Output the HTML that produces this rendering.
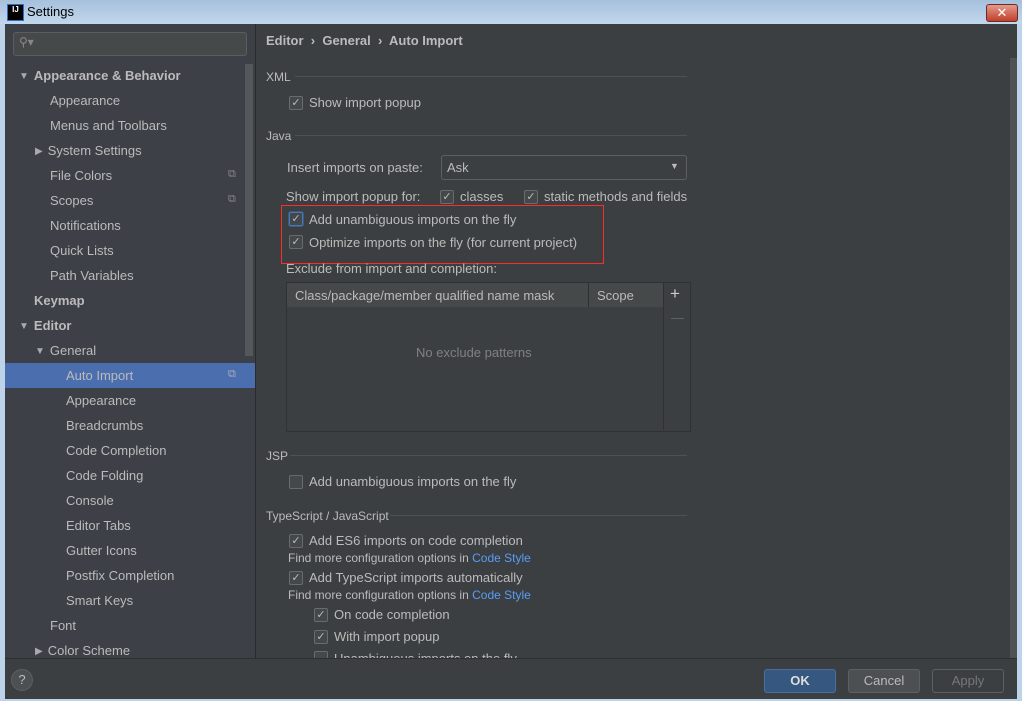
<!DOCTYPE html><html><head><style>
body{margin:0;width:1022px;height:701px;overflow:hidden;background:#bcd3ea;font-family:"Liberation Sans","DejaVu Sans",sans-serif;font-size:13px;color:#bbbbbb;position:relative}
.a{position:absolute;white-space:nowrap}
.title{position:absolute;left:0;top:0;width:1022px;height:24px;background:linear-gradient(#a6c0dc,#c2d7ec)}
.win{position:absolute;left:5px;top:24px;width:1012px;height:674px;background:#3c3f41}
.side{position:absolute;left:5px;top:24px;width:250px;height:634px;background:#3d4047;border-right:1px solid #2b2b2b}
.foot{position:absolute;left:5px;top:658px;width:1012px;height:40px;background:#3c3f41;border-top:1px solid #2d2f30}
.cb{position:absolute;width:12px;height:12px;border:1px solid #6b6b6b;border-radius:2px;background:#43494a;font-size:11px;line-height:12px;text-align:center;color:#bbb}
.sep{position:absolute;height:1px;background:#4f5254}
.btn{position:absolute;height:22px;border:1px solid #5e6060;border-radius:3px;background:#4c5052;text-align:center;line-height:22px}
.tr{font-size:10px;color:#aaa;margin-right:5px;position:relative;top:-1px}
a{color:#589df6;text-decoration:none}
</style></head><body>
<div class="title"></div>
<div class="a" style="left:7px;top:4px;width:15px;height:15px;background:#000;border:1px solid #2a6fc9;color:#fff;font-size:8px;font-weight:bold;line-height:9px;text-align:center">IJ</div>
<div class="a" style="left:27px;top:4px;color:#000;font-size:13px">Settings</div>
<div class="a" style="left:986px;top:4px;width:30px;height:16px;background:linear-gradient(#e49a8a,#c0402c);border:1px solid #6b2a2a;border-radius:3px;color:#fff;font-weight:bold;text-align:center;line-height:16px;font-size:13px">✕</div>
<div class="win"></div>
<div class="side"></div>
<div class="a" style="left:13px;top:32px;width:232px;height:22px;border:1px solid #5a5d60;border-radius:3px;background:#45494a"></div>
<div class="a" style="left:19px;top:35px;color:#888;font-size:12px">⚲▾</div>
<div class="a" style="left:245px;top:64px;width:8px;height:292px;background:#55585b"></div>
<div class="a" style="left:5px;top:363px;width:250px;height:25px;background:#4b6eaf"></div>
<div class="a" style="left:19px;top:68px;font-weight:bold"><span class="tr">▼</span>Appearance &amp; Behavior</div>
<div class="a" style="left:50px;top:93px">Appearance</div>
<div class="a" style="left:50px;top:118px">Menus and Toolbars</div>
<div class="a" style="left:35px;top:143px"><span class="tr">▶</span>System Settings</div>
<div class="a" style="left:50px;top:168px">File Colors</div>
<div class="a" style="left:50px;top:193px">Scopes</div>
<div class="a" style="left:50px;top:218px">Notifications</div>
<div class="a" style="left:50px;top:243px">Quick Lists</div>
<div class="a" style="left:50px;top:268px">Path Variables</div>
<div class="a" style="left:34px;top:293px;font-weight:bold">Keymap</div>
<div class="a" style="left:19px;top:318px;font-weight:bold"><span class="tr">▼</span>Editor</div>
<div class="a" style="left:35px;top:343px"><span class="tr">▼</span>General</div>
<div class="a" style="left:66px;top:368px">Auto Import</div>
<div class="a" style="left:66px;top:393px">Appearance</div>
<div class="a" style="left:66px;top:418px">Breadcrumbs</div>
<div class="a" style="left:66px;top:443px">Code Completion</div>
<div class="a" style="left:66px;top:468px">Code Folding</div>
<div class="a" style="left:66px;top:493px">Console</div>
<div class="a" style="left:66px;top:518px">Editor Tabs</div>
<div class="a" style="left:66px;top:543px">Gutter Icons</div>
<div class="a" style="left:66px;top:568px">Postfix Completion</div>
<div class="a" style="left:66px;top:593px">Smart Keys</div>
<div class="a" style="left:50px;top:618px">Font</div>
<div class="a" style="left:35px;top:643px"><span class="tr">▶</span>Color Scheme</div>
<div class="a" style="left:228px;top:168px;color:#888;font-size:11px">⧉</div>
<div class="a" style="left:228px;top:193px;color:#888;font-size:11px">⧉</div>
<div class="a" style="left:228px;top:368px;color:#aab;font-size:11px">⧉</div>

<div class="a" style="left:266px;top:33px;font-weight:bold">Editor &nbsp;›&nbsp; General &nbsp;›&nbsp; Auto Import</div>
<div class="a" style="left:1010px;top:58px;width:7px;height:600px;background:#4f5254"></div>
<div class="a" style="left:266px;top:70px;font-size:12px">XML</div><div class="sep" style="left:295px;top:76px;width:392px"></div>
<div class="cb" style="left:289px;top:96px">✓</div><div class="a" style="left:309px;top:95px">Show import popup</div>
<div class="a" style="left:266px;top:129px;font-size:12px">Java</div><div class="sep" style="left:295px;top:135px;width:392px"></div>
<div class="a" style="left:287px;top:160px">Insert imports on paste:</div>
<div class="a" style="left:441px;top:155px;width:244px;height:23px;border:1px solid #5e6060;border-radius:3px;background:#3c3f41"></div>
<div class="a" style="left:447px;top:160px">Ask</div><div class="a" style="left:670px;top:161px;font-size:9px">▼</div>
<div class="a" style="left:286px;top:189px">Show import popup for:</div>
<div class="cb" style="left:440px;top:190px">✓</div><div class="a" style="left:460px;top:189px">classes</div>
<div class="cb" style="left:524px;top:190px">✓</div><div class="a" style="left:544px;top:189px">static methods and fields</div>
<div style="position:absolute;left:281px;top:205px;width:321px;height:57px;border:1px solid #ff2a2a"></div>
<div class="cb" style="left:289px;top:212px;border-color:#4a78b0;box-shadow:0 0 0 1px #3a5a85">✓</div><div class="a" style="left:309px;top:212px">Add unambiguous imports on the fly</div>
<div class="cb" style="left:289px;top:235px">✓</div><div class="a" style="left:309px;top:235px">Optimize imports on the fly (for current project)</div>
<div class="a" style="left:286px;top:261px">Exclude from import and completion:</div>
<div class="a" style="left:286px;top:282px;width:403px;height:148px;border:1px solid #2f3133;background:#3c3f41"></div>
<div class="a" style="left:287px;top:283px;width:376px;height:24px;background:#45494a;border-right:1px solid #2f3133"></div>
<div class="a" style="left:588px;top:283px;width:1px;height:24px;background:#2f3133"></div>
<div class="a" style="left:663px;top:283px;width:1px;height:147px;background:#2f3133"></div>
<div class="a" style="left:295px;top:288px">Class/package/member qualified name mask</div>
<div class="a" style="left:597px;top:288px">Scope</div>
<div class="a" style="left:670px;top:284px;font-size:17px;color:#ccc">+</div>
<div class="a" style="left:671px;top:310px;color:#666">—</div>
<div class="a" style="left:416px;top:345px;color:#808080">No exclude patterns</div>
<div class="a" style="left:266px;top:449px;font-size:12px">JSP</div><div class="sep" style="left:290px;top:455px;width:397px"></div>
<div class="cb" style="left:289px;top:475px"></div><div class="a" style="left:309px;top:474px">Add unambiguous imports on the fly</div>
<div class="a" style="left:266px;top:509px;font-size:12px">TypeScript / JavaScript</div><div class="sep" style="left:390px;top:515px;width:297px"></div>
<div class="cb" style="left:289px;top:534px">✓</div><div class="a" style="left:309px;top:533px">Add ES6 imports on code completion</div>
<div class="a" style="left:288px;top:551px;font-size:12px">Find more configuration options in <a>Code Style</a></div>
<div class="cb" style="left:289px;top:571px">✓</div><div class="a" style="left:309px;top:570px">Add TypeScript imports automatically</div>
<div class="a" style="left:288px;top:588px;font-size:12px">Find more configuration options in <a>Code Style</a></div>
<div class="cb" style="left:314px;top:608px">✓</div><div class="a" style="left:334px;top:607px">On code completion</div>
<div class="cb" style="left:314px;top:630px">✓</div><div class="a" style="left:334px;top:629px">With import popup</div>
<div class="a" style="left:314px;top:651px;height:7px;overflow:hidden;width:300px"><div class="cb" style="left:0;top:0"></div><span style="position:absolute;left:20px;top:0">Unambiguous imports on the fly</span></div>
<div class="foot"></div>
<div class="a" style="left:11px;top:669px;width:20px;height:20px;border:1px solid #5e6060;border-radius:50%;background:#4c5052;text-align:center;line-height:20px">?</div>
<div class="btn" style="left:764px;top:669px;width:70px;background:#365880;border-color:#4a6f9a;font-weight:bold;color:#ddd">OK</div>
<div class="btn" style="left:848px;top:669px;width:70px">Cancel</div>
<div class="btn" style="left:932px;top:669px;width:70px;background:#3c3f41;color:#777">Apply</div>
</body></html>
